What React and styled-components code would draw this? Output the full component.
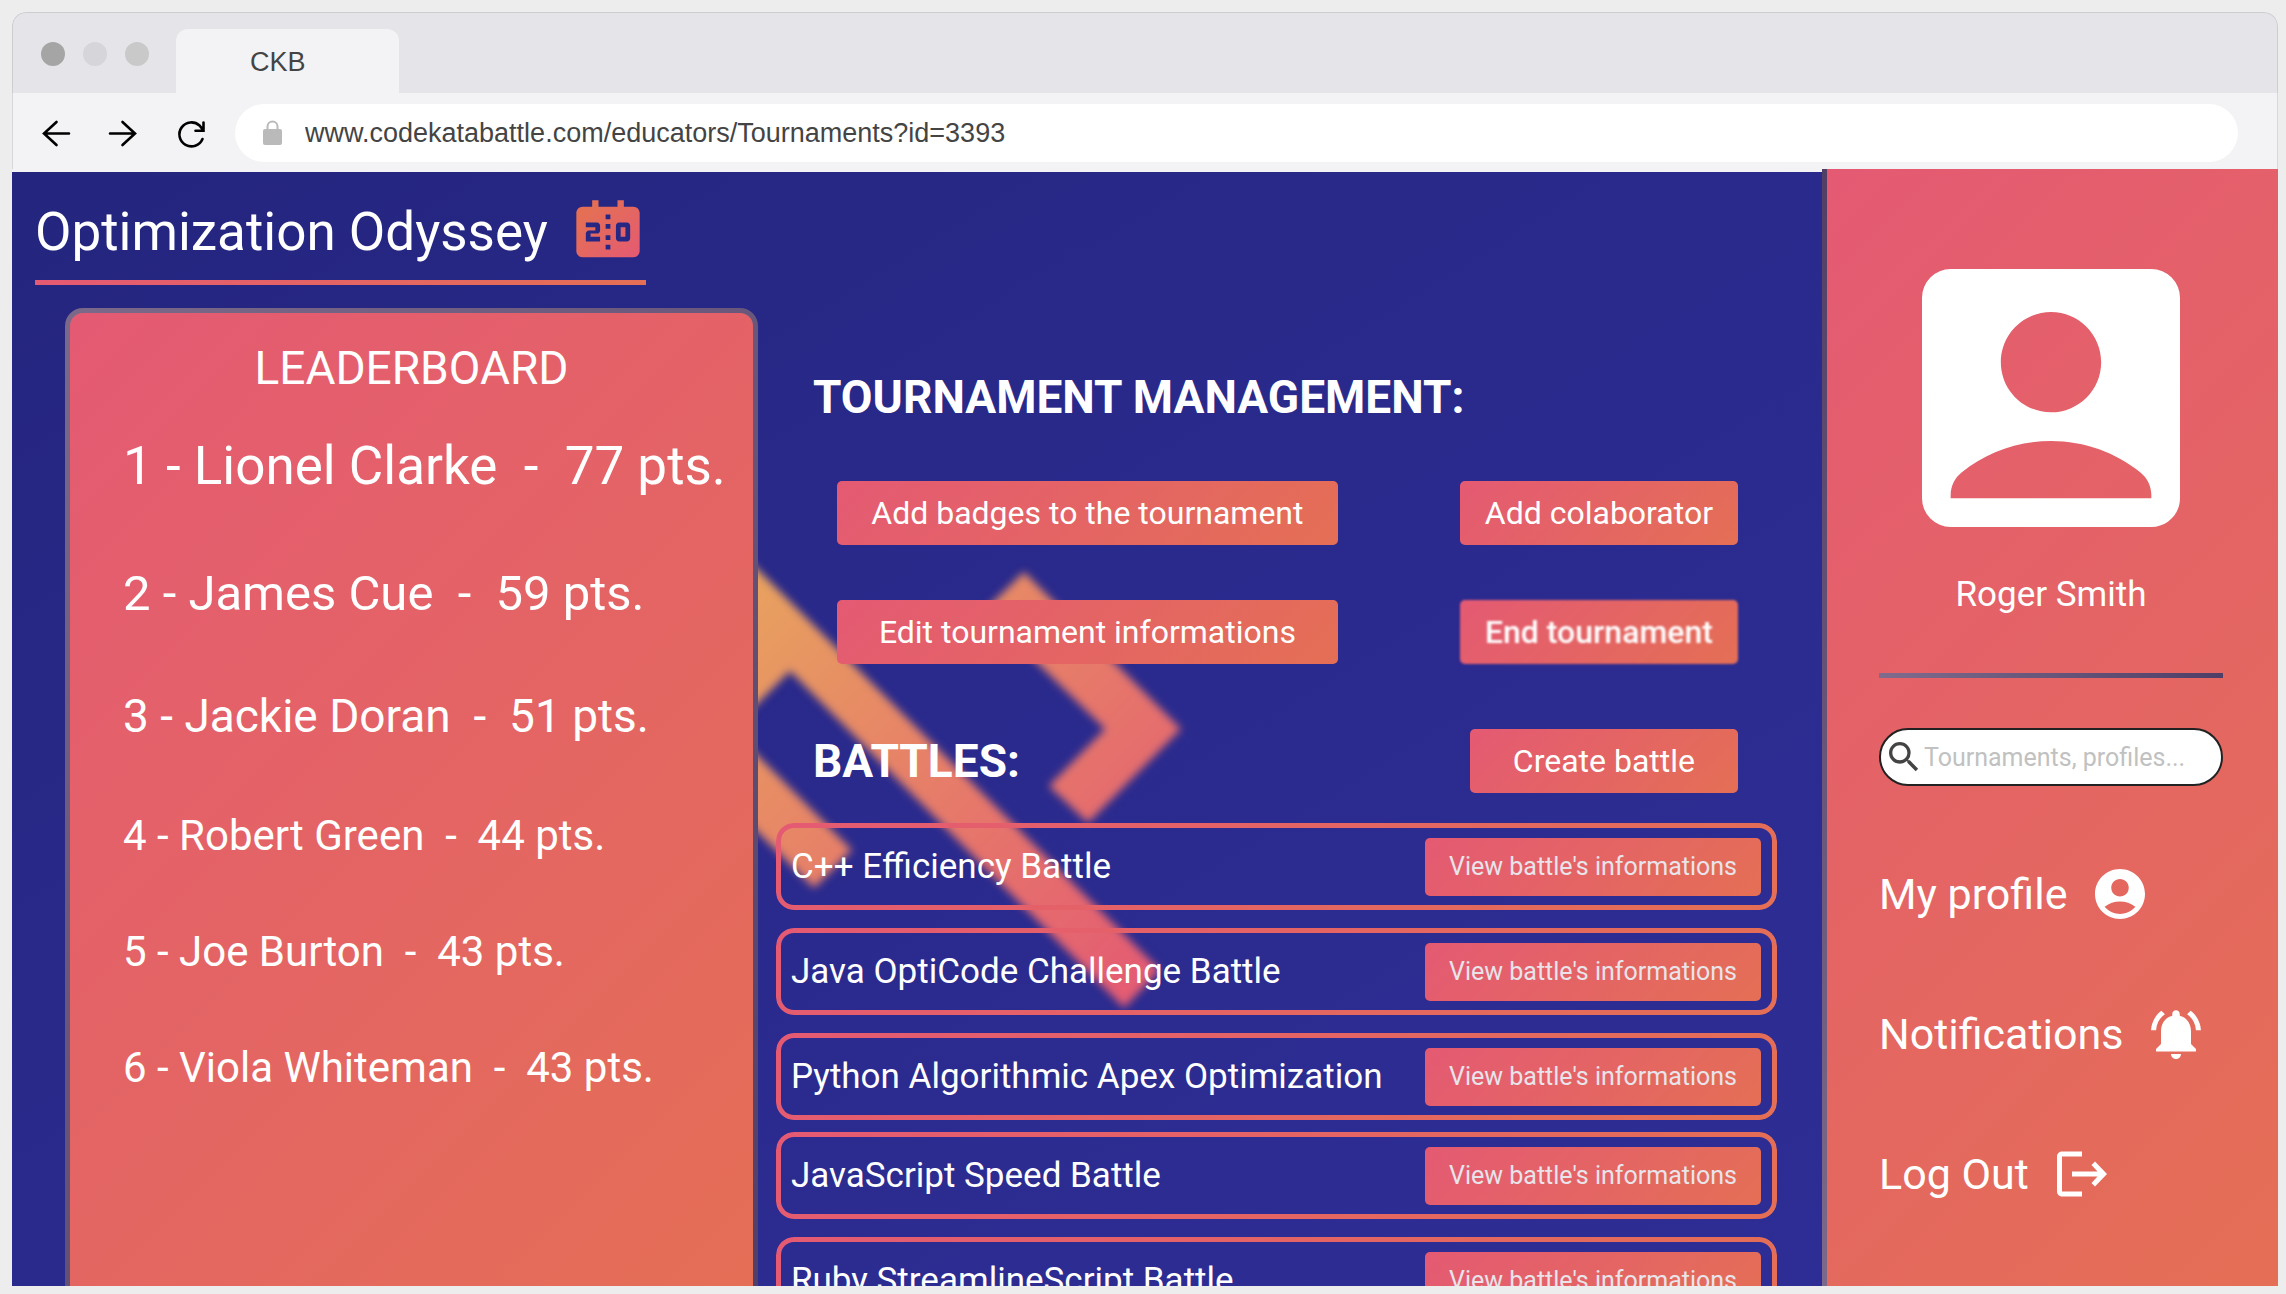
import React from "react";
import styled, { createGlobalStyle } from "styled-components";

const PINK = "#e45a73";
const ORANGE = "#e46f55";
const warm = `linear-gradient(135deg, ${PINK}, ${ORANGE})`;

const GlobalStyle = createGlobalStyle`
  *, *::before, *::after { box-sizing: border-box; }
  body { margin: 0; background: #ededed; }
  h1, h2, p, ol, ul { margin: 0; padding: 0; font-weight: 400; }
  ol, ul { list-style: none; }
  button, input { font: inherit; border: 0; margin: 0; padding: 0; }
  svg { display: block; flex: none; }
`;

const Desktop = styled.div`
  height: 100vh;
  padding: 12px 8px 8px 12px;
  font-family: Roboto, "Liberation Sans", sans-serif;
  color: #fff;
`;

const BrowserWindow = styled.div`
  height: 100%;
  display: flex;
  flex-direction: column;
  overflow: hidden;
  background: #f3f3f5;
  border-radius: 14px 14px 0 0;
`;

const TabStrip = styled.div`
  display: flex;
  align-items: flex-end;
  height: 81px;
  padding-left: 28px;
  background: #e5e4e9;
  border: 1px solid #cdcdd0;
  border-bottom: 0;
  border-radius: 14px 14px 0 0;
`;

const Lights = styled.div`
  display: flex;
  gap: 18px;
  padding: 0 27px 27px 0;
`;

const Light = styled.span`
  width: 24px;
  height: 24px;
  border-radius: 50%;
  background: ${(p) => p.$color};
`;

const Tab = styled.div`
  width: 223px;
  height: 64px;
  padding-left: 74px;
  border-radius: 12px 12px 0 0;
  background: #f3f3f5;
  color: #444;
  font: 27px/66px "Liberation Sans", Arial, sans-serif;
`;

const Toolbar = styled.div`
  display: flex;
  align-items: center;
  height: 76px;
  padding: 4px 39px 0 26px;
  border: solid #d8d8da;
  border-width: 0 1px;
`;

const ToolButton = styled.button`
  width: 36px;
  height: 36px;
  margin-right: ${(p) => p.$after}px;
  background: none;
  color: #000;
`;

const Address = styled.label`
  flex: 1;
  display: flex;
  align-items: center;
  gap: 23px;
  height: 58px;
  padding-left: 28px;
  border-radius: 29px;
  background: #fff;
`;

const AddressInput = styled.input`
  flex: 1;
  height: 100%;
  background: none;
  outline: none;
  color: #444;
  font: 27px "Liberation Sans", Arial, sans-serif;
`;

const Page = styled.div`
  flex: 1;
  min-height: 0;
  display: grid;
  grid-template-columns: minmax(0, 1fr) 456px;
`;

const Main = styled.main`
  position: relative;
  display: flex;
  flex-direction: column;
  min-height: 0;
  overflow: hidden;
  padding: 22px 45px 0 53px;
  border-top: 3px solid #f3f3f5;
  background: linear-gradient(to bottom right, #24257e, #2a2a8d 50%, #2d2d95) padding-box;
`;

const Backdrop = styled.svg`
  position: absolute;
  left: 0;
  top: 0;
  filter: blur(4px);
`;

const TitleBar = styled.header`
  position: relative;
  align-self: flex-start;
  display: flex;
  align-items: center;
  gap: 22px;
  margin-left: -30px;
  padding-bottom: 10px;
  border-bottom: 5px solid;
  border-image: linear-gradient(to right, ${PINK}, ${ORANGE}) 1;
`;

const Title = styled.h1`
  font-size: 53px;
  line-height: 64px;
`;

const Columns = styled.div`
  position: relative;
  flex: 1;
  min-height: 0;
  display: grid;
  grid-template-columns: minmax(0, 9fr) minmax(0, 13fr);
  column-gap: 18px;
  margin-top: 23px;
`;

const Leaderboard = styled.section`
  padding: 27px 0 0 53px;
  border: 5px solid transparent;
  border-bottom: 0;
  border-radius: 18px 18px 0 0;
  background: ${warm} padding-box, linear-gradient(135deg, #7b6989, #4f3e67) border-box;
`;

const LeaderboardTitle = styled.h2`
  padding-right: 53px;
  text-align: center;
  font-size: 46px;
  line-height: 56px;
`;

const Ranking = styled.ol`
  display: flex;
  flex-direction: column;
  gap: 66px;
  margin-top: 39px;
`;

const Rank = styled.li`
  font-size: ${(p) => p.$size}px;
  line-height: 1.2;
  white-space: pre;
`;

const Management = styled.section`
  padding-top: 61px;
`;

const SectionTitle = styled.h2`
  font-size: 46px;
  font-weight: 700;
  line-height: 56px;
`;

const SectionHead = styled.div`
  display: flex;
  align-items: center;
  justify-content: space-between;
  padding: 0 39px 0 37px;
`;

const Actions = styled.div`
  display: grid;
  grid-template-columns: 9fr 5fr;
  gap: 55px 122px;
  padding: 56px 39px 65px 61px;
`;

const Button = styled.button`
  height: 64px;
  padding: 0 ${(p) => p.$pad ?? 0}px;
  border-radius: 5px;
  background: ${warm};
  color: #fff;
  font-size: 32px;
  white-space: nowrap;
  cursor: pointer;
  ${(p) => p.$blurred && "filter: blur(1px); font-weight: 500;"}
`;

const SmallButton = styled(Button)`
  height: 58px;
  color: #e8e4ea;
  font-size: 25px;
`;

const BattleGroups = styled.div`
  display: flex;
  flex-direction: column;
  gap: 12px;
  margin-top: 30px;
`;

const BattleList = styled.ul`
  display: flex;
  flex-direction: column;
  gap: 18px;
`;

const Battle = styled.li`
  position: relative;
  display: flex;
  align-items: center;
  justify-content: space-between;
  height: 87px;
  padding: 0 16px 0 15px;
  font-size: 35px;

  &::before {
    content: "";
    position: absolute;
    inset: 0;
    padding: 5px;
    border-radius: 18px;
    background: ${warm};
    -webkit-mask: linear-gradient(#000 0 0) content-box, linear-gradient(#000 0 0);
    -webkit-mask-composite: xor;
    mask-composite: exclude;
    pointer-events: none;
  }
`;

const Sidebar = styled.aside`
  display: flex;
  flex-direction: column;
  overflow: hidden;
  padding: 100px 55px 0 52px;
  border-left: 5px solid transparent;
  background: ${warm} padding-box, linear-gradient(#513f66, #7b698b) border-box;
`;

const Person = styled.div`
  display: flex;
  flex-direction: column;
  align-items: center;
  gap: 47px;
`;

const PersonName = styled.p`
  font-size: 35px;
  line-height: 42px;
`;

const Divider = styled.hr`
  width: 100%;
  height: 5px;
  margin: 57px 0 50px;
  border: 0;
  background: linear-gradient(to right, #7f6c8d, #4f3e67);
`;

const Search = styled.label`
  display: flex;
  align-items: center;
  height: 58px;
  padding-left: 3px;
  border: 2px solid #222;
  border-radius: 29px;
  background: #fff;
`;

const SearchInput = styled.input`
  flex: 1;
  min-width: 0;
  background: none;
  outline: none;
  color: #444;
  font-size: 25px;
  &::placeholder { color: #c1c1c1; opacity: 1; }
`;

const Nav = styled.nav`
  display: flex;
  flex-direction: column;
  gap: 80px;
  margin-top: 78px;
`;

const NavLink = styled.a`
  display: flex;
  align-items: center;
  gap: 23px;
  color: #fff;
  font-size: 43px;
  line-height: 58px;
  text-decoration: none;
`;

const ranking = [
  { text: "1 - Lionel Clarke  -  77 pts.", size: 53 },
  { text: "2 - James Cue  -  59 pts.", size: 49 },
  { text: "3 - Jackie Doran  -  51 pts.", size: 46 },
  { text: "4 - Robert Green  -  44 pts.", size: 42 },
  { text: "5 - Joe Burton  -  43 pts.", size: 42 },
  { text: "6 - Viola Whiteman  -  43 pts.", size: 42 },
];

const battleGroups = [
  ["C++ Efficiency Battle", "Java OptiCode Challenge Battle", "Python Algorithmic Apex Optimization"],
  ["JavaScript Speed Battle", "Ruby StreamlineScript Battle"],
];

function Icon({ size, children, box = "0 0 24 24" }) {
  return (
    <svg width={size} height={size} viewBox={box} fill="currentColor" aria-hidden="true">
      {children}
    </svg>
  );
}

function StrokeIcon({ d }) {
  return (
    <svg
      width="36"
      height="36"
      viewBox="0 -1 36 36"
      fill="none"
      stroke="currentColor"
      strokeWidth="2.6"
      strokeLinecap="round"
      aria-hidden="true"
    >
      <path d={d} />
    </svg>
  );
}

export default function App() {
  return (
    <Desktop>
      <GlobalStyle />
      <BrowserWindow>
        <TabStrip>
          <Lights>
            <Light $color="#a5a5a5" />
            <Light $color="#d6d5da" />
            <Light $color="#c9c9c9" />
          </Lights>
          <Tab>CKB</Tab>
        </TabStrip>
        <Toolbar>
          <ToolButton $after={28} aria-label="Back">
            <StrokeIcon d="M30 17.5H5.500M17.500 6L5 17.500L17.500 29" />
          </ToolButton>
          <ToolButton $after={34} aria-label="Forward">
            <StrokeIcon d="M7 17.500H31.500M19.500 6L32 17.500L19.500 29" />
          </ToolButton>
          <ToolButton $after={26} aria-label="Reload">
            <StrokeIcon d="M29.500 23A12 12 0 1 1 26.500 9.500L30.500 14.500M30.500 6.500V14.700H22.500" />
          </ToolButton>
          <Address>
            <svg width="19" height="26" viewBox="0 0 19 26" aria-hidden="true">
              <path d="M4.500 10V6.500a5 5 0 0 1 10 0V10" fill="none" stroke="#bababa" strokeWidth="2" />
              <rect y="9" width="19" height="16" rx="2" fill="#bababa" />
            </svg>
            <AddressInput
              aria-label="Address"
              defaultValue="www.codekatabattle.com/educators/Tournaments?id=3393"
            />
          </Address>
        </Toolbar>
        <Page>
          <Main>
            <Backdrop width="1240" height="900" viewBox="12 172 1240 900" aria-hidden="true">
              <defs>
                <linearGradient id="brand" gradientUnits="userSpaceOnUse" x1="730" y1="620" x2="1110" y2="1000">
                  <stop offset="0" stopColor="#e8a05f" />
                  <stop offset="0.6" stopColor="#e6756b" />
                  <stop offset="1" stopColor="#e45d72" />
                </linearGradient>
              </defs>
              <g fill="url(#brand)">
                <path d="M1024 572L1181 729L1088 823L1049 786L1105 729L984 611Z" />
                <path d="M690 502L1160 970L1124 1008L790 671L700 761L690 620Z" />
                <path d="M690 688L852 850L814 888L690 765Z" />
              </g>
            </Backdrop>
            <TitleBar>
              <Title>Optimization Odyssey</Title>
              <svg width="76" height="76" viewBox="0 0 24 24" aria-hidden="true">
                <defs>
                  <linearGradient id="score" x1="0" y1="0" x2="1" y2="1">
                    <stop offset="0.200" stopColor={ORANGE} />
                    <stop offset="1" stopColor={PINK} />
                  </linearGradient>
                </defs>
                <path
                  fill="url(#score)"
                  d="M17.500 13.500H16v-3h1.500v3zM20 4h-3V2h-2v2H9V2H7v2H4c-1.100 0-2 .9-2 2v12c0 1.100.9 2 2 2h16c1.100 0 2-.9 2-2V6c0-1.100-.9-2-2-2zM9.500 11.500c0 .55-.45 1-1 1h-2v1h3V15H5v-2.500c0-.55.45-1 1-1h2v-1H5V9h3.500c.55 0 1 .45 1 1v1.500zm3.250 6h-1.500V16h1.500v1.500zm0-3h-1.500V13h1.500v1.500zm0-3.500h-1.500V9.500h1.500V11zm0-3h-1.500V6.500h1.500V8zM19 14c0 .55-.45 1-1 1h-2.500c-.55 0-1-.45-1-1v-4c0-.55.45-1 1-1H18c.55 0 1 .45 1 1v4z"
                />
              </svg>
            </TitleBar>
            <Columns>
              <Leaderboard>
                <LeaderboardTitle>LEADERBOARD</LeaderboardTitle>
                <Ranking>
                  {ranking.map((r) => (
                    <Rank key={r.text} $size={r.size}>{r.text}</Rank>
                  ))}
                </Ranking>
              </Leaderboard>
              <Management>
                <SectionHead>
                  <SectionTitle>TOURNAMENT MANAGEMENT:</SectionTitle>
                </SectionHead>
                <Actions>
                  <Button>Add badges to the tournament</Button>
                  <Button>Add colaborator</Button>
                  <Button>Edit tournament informations</Button>
                  <Button $blurred>End tournament</Button>
                </Actions>
                <SectionHead>
                  <SectionTitle>BATTLES:</SectionTitle>
                  <Button $pad={43}>Create battle</Button>
                </SectionHead>
                <BattleGroups>
                  {battleGroups.map((group) => (
                    <BattleList key={group[0]}>
                      {group.map((name) => (
                        <Battle key={name}>
                          {name}
                          <SmallButton $pad={24}>View battle's informations</SmallButton>
                        </Battle>
                      ))}
                    </BattleList>
                  ))}
                </BattleGroups>
              </Management>
            </Columns>
          </Main>
          <Sidebar>
            <Person>
              <Icon size={258} box="3 3 18 18">
                <path d="M19 3H5a2 2 0 0 0-2 2v14a2 2 0 0 0 2 2h14c1.100 0 2-.9 2-2V5a2 2 0 0 0-2-2zm-7 3c1.930 0 3.500 1.570 3.500 3.500S13.930 13 12 13s-3.500-1.570-3.500-3.500S10.070 6 12 6zm7 13H5v-.23c0-.62.28-1.200.76-1.580C7.470 15.820 9.640 15 12 15s4.530.82 6.240 2.190c.48.38.76.97.76 1.580V19z" />
              </Icon>
              <PersonName>Roger Smith</PersonName>
            </Person>
            <Divider />
            <Search>
              <svg width="40" height="40" viewBox="0 0 24 24" fill="#444" aria-hidden="true">
                <path d="M15.500 14h-.79l-.28-.27A6.471 6.471 0 0 0 16 9.500 6.500 6.500 0 1 0 9.500 16c1.610 0 3.090-.59 4.230-1.570l.27.28v.79l5 4.990L20.490 19l-4.990-5zm-6 0C7.010 14 5 11.990 5 9.500S7.010 5 9.500 5 14 7.010 14 9.500 11.990 14 9.500 14z" />
              </svg>
              <SearchInput aria-label="Search" placeholder="Tournaments, profiles..." />
            </Search>
            <Nav>
              <NavLink href="#profile">
                My profile
                <Icon size={60}>
                  <path d="M12 2C6.480 2 2 6.480 2 12s4.480 10 10 10 10-4.480 10-10S17.520 2 12 2zm0 4c1.930 0 3.500 1.570 3.500 3.500S13.930 13 12 13s-3.500-1.570-3.500-3.500S10.070 6 12 6zm0 14c-2.030 0-4.430-.82-6.140-2.880a9.947 9.947 0 0 1 12.280 0C16.430 19.180 14.030 20 12 20z" />
                </Icon>
              </NavLink>
              <NavLink href="#notifications">
                Notifications
                <Icon size={60}>
                  <path d="M7.580 4.080L6.150 2.650C3.750 4.480 2.170 7.300 2.030 10.500h2a8.445 8.445 0 0 1 3.550-6.420zm12.390 6.420h2c-.15-3.200-1.730-6.020-4.120-7.850l-1.420 1.430a8.495 8.495 0 0 1 3.540 6.420zM18 11c0-3.070-1.640-5.640-4.500-6.320V4c0-.83-.67-1.500-1.500-1.500s-1.500.67-1.500 1.500v.68C7.630 5.360 6 7.920 6 11v5l-2 2v1h16v-1l-2-2v-5zm-6 11c.14 0 .27-.01.4-.04.65-.14 1.180-.58 1.440-1.180.1-.24.15-.5.15-.78h-4c.01 1.100.9 2 2.010 2z" />
                </Icon>
              </NavLink>
              <NavLink href="#logout">
                Log Out
                <Icon size={60}>
                  <path d="M4 3H12V5H4V19H12V21H4C2.900 21 2 20.100 2 19V5C2 3.900 2.900 3 4 3ZM17.200 7L22 12L17.200 17L15.800 15.600L18.200 13H8V11H18.200L15.800 8.400Z" />
                </Icon>
              </NavLink>
            </Nav>
          </Sidebar>
        </Page>
      </BrowserWindow>
    </Desktop>
  );
}
